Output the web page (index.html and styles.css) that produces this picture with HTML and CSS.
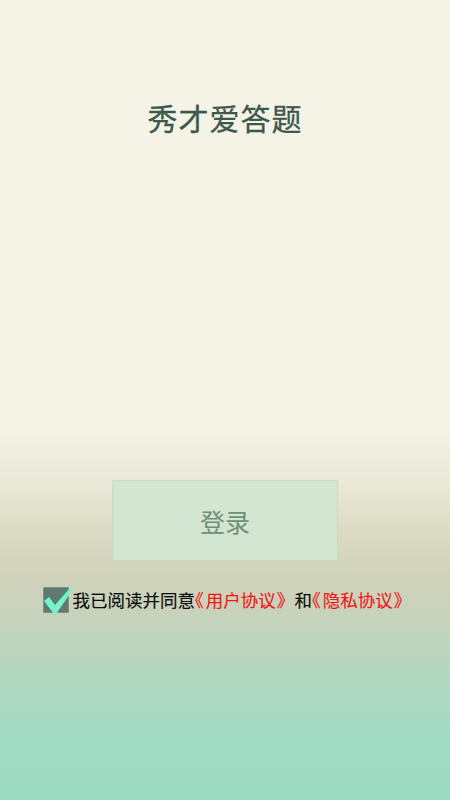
FILE: index.html
```html
<!DOCTYPE html>
<html lang="zh-CN">
<head>
<meta charset="utf-8">
<meta name="viewport" content="width=device-width, initial-scale=1">
<title>秀才爱答题</title>
<link rel="stylesheet" href="styles.css">
</head>
<body>
<div class="page">
  <h1 class="title">秀才爱答题</h1>
  <button class="login-btn" type="button">登录</button>
  <div class="agree">
    <span class="checkbox">
      <svg class="check" viewBox="0 0 30 30" width="30" height="30" aria-hidden="true">
        <path d="M1 14 L6 10 L12 18 L27 1 L29 4 L13 27 L11 27 Z" fill="#72f5cc"/>
      </svg>
    </span>
    <span class="agree-text">我已阅读并同意<a class="link"><span class="lb">《</span>用户协议<span class="rb">》</span></a> 和<a class="link"><span class="lb">《</span>隐私协议<span class="rb">》</span></a></span>
  </div>
</div>
</body>
</html>
```

FILE: styles.css
```css
html, body {
  margin: 0;
  padding: 0;
}
body {
  font-family: "Noto Sans CJK SC", "Noto Sans", sans-serif;
}
.page {
  width: 450px;
  height: 800px;
  display: flex;
  flex-direction: column;
  align-items: center;
  background: linear-gradient(to bottom,
    #f5f2e6 0%,
    #f5f2e6 54%,
    #ebe9d8 60%,
    #dcdcc6 66%,
    #d1d2bb 72%,
    #c5d3bc 78%,
    #b2d8c1 85%,
    #a2dbc4 92%,
    #9ddbc3 100%);
  box-sizing: border-box;
  padding-top: 99px;
}
.title {
  margin: 0;
  font-size: 30px;
  line-height: 36px;
  font-weight: 400;
  color: #3d584c;
  letter-spacing: 1px;
  -webkit-text-stroke: 0.3px #3d584c;
}
.login-btn {
  margin-top: 345px;
  width: 226px;
  height: 81px;
  background: #d3e6d2;
  border: 1px solid #cbdac5;
  border-radius: 1px;
  font-family: inherit;
  font-size: 25px;
  color: #6f8f78;
  padding: 0;
}
.agree {
  margin-top: 26px;
  display: flex;
  align-items: center;
  gap: 4px;
}
.checkbox {
  position: relative;
  width: 24px;
  height: 24px;
  background: #5f7b6f;
  border: 1px solid #7c9184;
  border-radius: 1px;
  flex: none;
}
.check {
  position: absolute;
  left: -1px;
  top: -1px;
}
.agree-text {
  font-size: 17.5px;
  line-height: 26px;
  font-weight: 400;
  color: #0c0c0c;
  -webkit-text-stroke: 0.15px currentColor;
  white-space: nowrap;
}
.link {
  color: #f01616;
}
.lb,
.rb {
  font-feature-settings: "halt" 1;
}
.lb {
  margin-right: 2px;
}
.rb {
  margin-left: 1px;
  margin-right: 5px;
}
```
